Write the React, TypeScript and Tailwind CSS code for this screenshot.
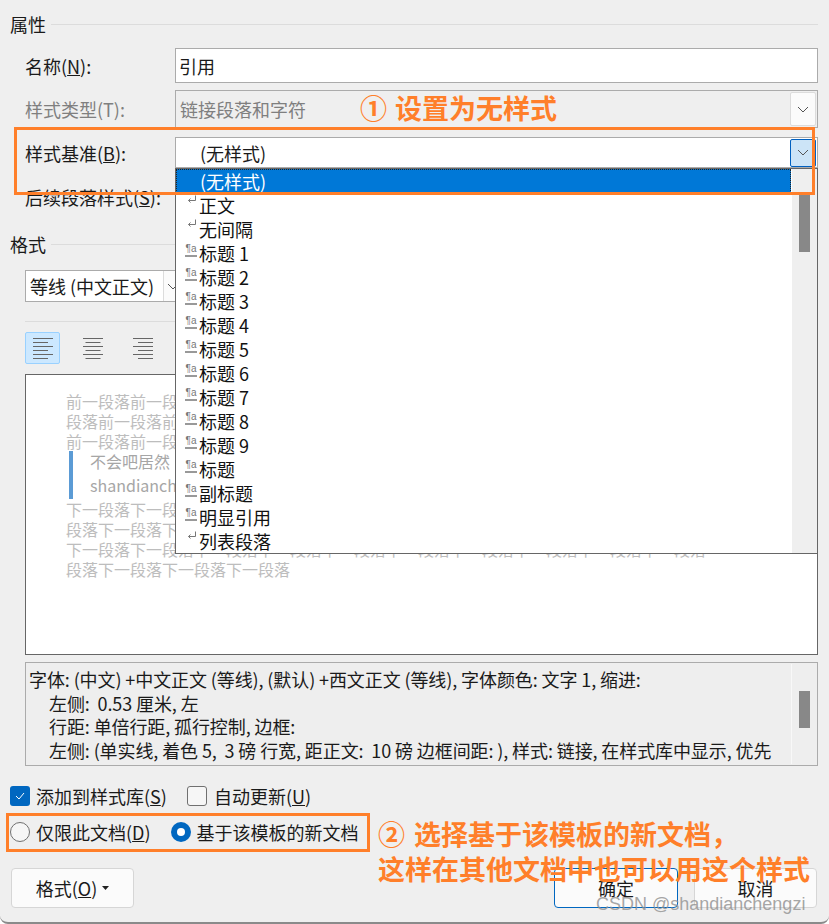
import React from "react";

const Chevron = ({ className = "" }: { className?: string }) => (
  <svg width="12" height="7" viewBox="0 0 12 7" className={className} fill="none" stroke="#555" strokeWidth="1">
    <path d="M1 1l5 5 5-5" />
  </svg>
);

const ReturnMark = () => (
  <svg width="10" height="9" viewBox="0 0 10 9" fill="none" stroke="#777" strokeWidth="1">
    <path d="M8.5 0.5v5h-7M3.5 3.5l-2 2 2 2" />
  </svg>
);

const ParaMark = () => (
  <span className="flex h-[14px] w-[12px] flex-col items-center border-b-2 border-[#999] text-[10px] leading-[12px] text-[#777] font-['Liberation_Sans',sans-serif]">
    ¶a
  </span>
);

const Label = ({ children, muted }: { children: React.ReactNode; muted?: boolean }) => (
  <div className={`w-[150px] shrink-0 pl-[25px] box-content -ml-[25px] ${muted ? "text-[#7f7f7f]" : "text-[#1a1a1a]"}`}>{children}</div>
);

const Header = ({ children, className = "" }: { children: React.ReactNode; className?: string }) => (
  <div className={`flex h-[24px] items-center gap-[5px] pl-[10px] pr-[11px] ${className}`}>
    <span className="shrink-0">{children}</span>
    <div className="h-px flex-1 bg-[#dcdcdc]" />
  </div>
);

const AlignIcon = ({ mode }: { mode: "left" | "center" | "right" }) => {
  const rows = [20, 15, 20, 15, 20, 15];
  return (
    <svg width="20" height="21" viewBox="0 0 20 21" stroke="#666" strokeWidth="1">
      {rows.map((w, i) => {
        const x = mode === "left" ? 0 : mode === "center" ? (20 - w) / 2 : 20 - w;
        return <line key={i} x1={x} x2={x + w} y1={0.5 + i * 4} y2={0.5 + i * 4} />;
      })}
    </svg>
  );
};

const items: { t: string; m: "r" | "p" }[] = [
  { t: "正文", m: "r" },
  { t: "无间隔", m: "r" },
  { t: "标题 1", m: "p" },
  { t: "标题 2", m: "p" },
  { t: "标题 3", m: "p" },
  { t: "标题 4", m: "p" },
  { t: "标题 5", m: "p" },
  { t: "标题 6", m: "p" },
  { t: "标题 7", m: "p" },
  { t: "标题 8", m: "p" },
  { t: "标题 9", m: "p" },
  { t: "标题", m: "p" },
  { t: "副标题", m: "p" },
  { t: "明显引用", m: "p" },
  { t: "列表段落", m: "r" },
];

const before = [
  "前一段落前一段落前一段落前一段落前一段落前一段落前一段落前一段落前一段落前一段落前一",
  "段落前一段落前一段落前一段落前一段落前一段落前一段落前一段落前一段落前一段落前一段落",
  "前一段落前一段落前一段落前一段落前一段落前一段落前一段落前一段落前一段落前一段落前一",
];
const after = [
  "下一段落下一段落下一段落下一段落下一段落下一段落下一段落下一段落下一段落下一段落下一",
  "段落下一段落下一段落下一段落下一段落下一段落下一段落下一段落下一段落下一段落下一段落",
  "下一段落下一段落下一段落下一段落下一段落下一段落下一段落下一段落下一段落下一段落",
  "段落下一段落下一段落下一段落",
];

export default function App() {
  return (
    <div className="relative h-[924px] w-[829px] overflow-hidden rounded-b-[8px] border-b-2 border-[#8a8a8a] bg-[#efefef] pt-[12px] text-[18px] leading-[24px] text-[#1a1a1a] font-['Noto_Sans_CJK_SC',sans-serif]">
      <Header>属性</Header>

      <div className="mt-[12px] flex h-[35px] items-center pl-[25px] pr-[11px]">
        <Label>
          名称(<span className="underline">N</span>):
        </Label>
        <div className="flex h-full flex-1 items-center border border-[#ababab] bg-white pl-[3px]">引用</div>
      </div>

      <div className="mt-[7px] flex h-[38px] items-center pl-[25px] pr-[11px]">
        <Label muted>样式类型(T):</Label>
        <div className="flex h-full flex-1 items-center justify-between border border-[#ababab] bg-[#efefef] pl-[4px] pr-px text-[#7f7f7f]">
          <span>链接段落和字符</span>
          <div className="flex h-[34px] w-[26px] items-center justify-center rounded-[2px] border border-[#dcdcdc] bg-[#fbfbfb]">
            <Chevron />
          </div>
        </div>
      </div>

      <div className="mt-[9px] flex h-[31px] items-center pl-[25px] pr-[11px]">
        <Label>
          样式基准(<span className="underline">B</span>):
        </Label>
        <div className="flex h-full flex-1 items-center justify-between border border-[#ababab] bg-white pl-[24px] pr-px">
          <span>(无样式)</span>
          <div className="flex h-[28px] w-[26px] items-center justify-center rounded-[2px] border border-[#0060c0] bg-[#cce4f7]">
            <Chevron />
          </div>
        </div>
      </div>

      <div className="mt-[10px] flex h-[38px] items-center pl-[25px] pr-[11px]">
        <Label>
          后续段落样式(<span className="underline">S</span>):
        </Label>
        <div className="h-full flex-1 border border-[#ababab] bg-white" />
      </div>

      <Header className="mt-[16px]">格式</Header>

      <div className="mt-[14px] flex h-[32px] pl-[25px]">
        <div className="flex h-full w-[165px] items-center justify-between border border-[#ababab] bg-white pl-[4px]">
          <span className="whitespace-nowrap">等线 (中文正文)</span>
          <div className="flex h-full w-[26px] shrink-0 items-center justify-start border-l border-[#dcdcdc] bg-[#fbfbfb] pl-[3px]">
            <Chevron />
          </div>
        </div>
      </div>

      <div className="ml-[25px] mr-[11px] mt-[19px] h-px bg-[#dcdcdc]" />

      <div className="mt-[10px] flex h-[32px] items-center pl-[25px]">
        <div className="flex h-[32px] w-[35px] items-center justify-center rounded-[2px] border border-[#99d1ff] bg-[#cce8ff]">
          <AlignIcon mode="left" />
        </div>
        <div className="ml-[15px] flex w-[35px] justify-center">
          <AlignIcon mode="center" />
        </div>
        <div className="ml-[15px] flex w-[35px] justify-center">
          <AlignIcon mode="right" />
        </div>
      </div>

      <div className="ml-[25px] mr-[11px] mt-[10px] h-[281px] overflow-hidden border border-[#666] bg-white pl-[40px] pt-[16px] text-[16px] leading-[20px] text-[#bdbdbd]">
        {before.map((l) => (
          <div key={l} className="whitespace-nowrap">{l}</div>
        ))}
        <div className="my-0 ml-[3px] flex h-[48px] flex-col justify-center border-l-4 border-[#5b9bd5] pl-[17px] text-[#a6a6a6]">
          <div className="h-[24px] whitespace-nowrap">不会吧居然</div>
          <div className="h-[24px] whitespace-nowrap">shandianchengzi</div>
        </div>
        {after.map((l) => (
          <div key={l} className="whitespace-nowrap">{l}</div>
        ))}
      </div>

      <div className="ml-[25px] mr-[11px] mt-[7px] flex h-[104px] border border-[#ababab] bg-[#eeeeee] p-px">
        <div className="flex-1 overflow-hidden whitespace-pre pl-[2px] pt-[4px] leading-[23.7px] tracking-[-0.1px]">
          <div>字体: (中文) +中文正文 (等线), (默认) +西文正文 (等线), 字体颜色: 文字 1, 缩进:</div>
          <div className="pl-[20px]">左侧:  0.53 厘米, 左</div>
          <div className="pl-[20px]">行距: 单倍行距, 孤行控制, 边框:</div>
          <div className="pl-[20px]">左侧: (单实线, 着色 5,  3 磅 行宽, 距正文:  10 磅 边框间距: ), 样式: 链接, 在样式库中显示, 优先</div>
        </div>
        <div className="w-[25px] shrink-0 border-l border-[#f8f8f8] pl-[7px] pt-[27px]">
          <div className="h-[37px] w-[11px] bg-[#888]" />
        </div>
      </div>

      <div className="mt-[18px] flex h-[24px] items-center pl-[10px]">
        <div className="flex h-[20px] w-[20px] items-center justify-center rounded-[3px] bg-[#0067c0]">
          <svg width="12" height="10" viewBox="0 0 12 10" fill="none" stroke="#fff" strokeWidth="1">
            <path d="M2 5l3 3 5-6" />
          </svg>
        </div>
        <span className="ml-[6px]">
          添加到样式库(<span className="underline">S</span>)
        </span>
        <div className="ml-[20px] h-[20px] w-[20px] rounded-[3px] border border-[#707070] bg-[#f6f6f6]" />
        <span className="ml-[7px]">
          自动更新(<span className="underline">U</span>)
        </span>
      </div>

      <div className="mt-[12px] flex h-[24px] items-center pl-[10px]">
        <div className="h-[20px] w-[20px] rounded-full border border-[#707070] bg-[#f6f6f6]" />
        <span className="ml-[6px]">
          仅限此文档(<span className="underline">D</span>)
        </span>
        <div className="ml-[20px] flex h-[20px] w-[20px] items-center justify-center rounded-full bg-[#0067c0]">
          <div className="h-[8px] w-[8px] rounded-full bg-white" />
        </div>
        <span className="ml-[6px]">基于该模板的新文档</span>
      </div>

      <div className="mt-[24px] flex h-[40px] pl-[11px] pr-[12px]">
        <div className="flex w-[123px] items-center justify-center gap-[5px] rounded-[4px] border border-[#d6d6d6] bg-[#fbfbfb]">
          <span>
            格式(<span className="underline">O</span>)
          </span>
          <svg width="7" height="4" viewBox="0 0 7 4">
            <path d="M0 0h7L3.5 4z" fill="#222" />
          </svg>
        </div>
        <div className="ml-auto flex w-[124px] items-center justify-center rounded-[4px] border border-[#0067c0] bg-[#fbfbfb]">确定</div>
        <div className="ml-[16px] flex w-[123px] items-center justify-center rounded-[4px] border border-[#d6d6d6] bg-[#fbfbfb]">取消</div>
      </div>

      {/* open dropdown list */}
      <div className="absolute left-[175px] top-[168px] flex h-[386px] w-[643px] border border-[#666] bg-white">
        <div className="flex-1">
          <div className="flex h-[24px] items-center border border-dotted border-[#222] bg-[#0078d7] pl-[23px] text-white">(无样式)</div>
          {items.map((it) => (
            <div key={it.t} className="flex h-[24px] items-center">
              <div className="flex h-full w-[23px] items-start justify-end pr-[2px] pt-[2px]">
                {it.m === "r" ? <ReturnMark /> : <ParaMark />}
              </div>
              <span className="whitespace-nowrap text-[#111]">{it.t}</span>
            </div>
          ))}
        </div>
        <div className="ml-px w-[25px] bg-[#efefef] pl-[7px] pt-[23px]">
          <div className="h-[60px] w-[11px] bg-[#888]" />
        </div>
      </div>

      {/* annotations */}
      <div className="absolute left-[14px] top-[127px] h-[68px] w-[801px] border-[3px] border-[#ff7f2a]" />
      <div className="absolute left-[6px] top-[813px] h-[39px] w-[364px] border-[3px] border-[#ff7f2a]" />
      <div className="absolute left-[360px] top-[88px] flex items-center gap-[8px] whitespace-nowrap text-[27px] font-bold leading-[40px] text-[#ff7f2a]">
        <span>①</span>
        <span>设置为无样式</span>
      </div>
      <div className="absolute left-[378px] top-[816px] whitespace-nowrap text-[27px] font-bold leading-[35px] text-[#ff7f2a]">
        <div className="flex items-center gap-[9px]">
          <span>②</span>
          <span>选择基于该模板的新文档，</span>
        </div>
        <div>这样在其他文档中也可以用这个样式</div>
      </div>
      <div className="absolute left-[596px] top-[892px] whitespace-nowrap text-[18px] leading-[24px] text-[#8f8f8f]/80 font-['Liberation_Sans',sans-serif]">
        CSDN @shandianchengzi
      </div>
    </div>
  );
}
